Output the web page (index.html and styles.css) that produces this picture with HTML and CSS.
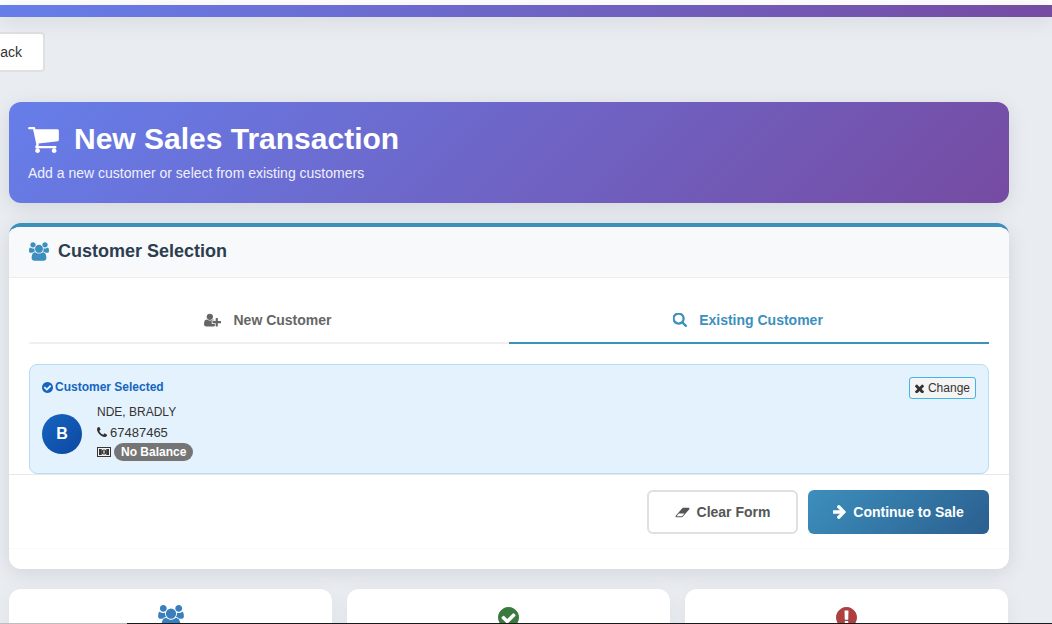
FILE: index.html
```html
<!DOCTYPE html>
<html lang="en">
<head>
<meta charset="utf-8">
<title>New Sales Transaction</title>
<link rel="stylesheet" href="styles.css">
</head>
<body>
<div class="topbar"></div>
<main class="page">
  <a class="back">Back</a>
  <header class="hero">
    <h1 class="hero-title">
      <svg class="hero-icon" viewBox="64 256 1664 1408"><path d="M704 1536q0 52-38 90t-90 38-90-38-38-90 38-90 90-38 90 38 38 90zm896 0q0 52-38 90t-90 38-90-38-38-90 38-90 90-38 90 38 38 90zm128-1088v512q0 24-16.500 42.500t-40.500 21.500l-1044 122q13 60 13 70 0 16-24 64h920q26 0 45 19t19 45-19 45-45 19h-1024q-26 0-45-19t-19-45q0-11 8-31.500t16-36 21.500-40 15.500-29.500l-177-823h-204q-26 0-45-19t-19-45 19-45 45-19h256q16 0 28.500 6.500t19.500 15.500 13 24.500 8 26 5.500 29.500 4.500 26h1201q26 0 45 19t19 45z"/></svg>
      New Sales Transaction
    </h1>
    <p class="hero-sub">Add a new customer or select from existing customers</p>
  </header>

  <section class="card">
    <div class="card-head">
      <svg class="users-icon" viewBox="0 0 1920 1792"><use href="#users"/></svg>
      <h2 class="card-title">Customer Selection</h2>
    </div>
    <div class="card-body">
      <div class="tabs">
        <div class="tab">
          <svg class="tab-icon" viewBox="0 128 2048 1536"><path d="M704 896q-159 0-271.500-112.500t-112.500-271.500 112.500-271.500 271.500-112.500 271.500 112.500 112.500 271.500-112.500 271.500-271.500 112.500zm960 128h352q13 0 22.500 9.500t9.500 22.500v192q0 13-9.500 22.500t-22.500 9.500h-352v352q0 13-9.500 22.500t-22.500 9.500h-192q-13 0-22.500-9.500t-9.500-22.500v-352h-352q-13 0-22.500-9.500t-9.500-22.500v-192q0-13 9.500-22.500t22.500-9.500h352v-352q0-13 9.500-22.500t22.500-9.500h192q13 0 22.500 9.500t9.500 22.500v352zm-736 224q0 52 38 90t90 38h256v238q-68 50-171 50h-874q-121 0-194-69.500t-73-189.500q0-53 3.500-103.500t14-109 26.500-108.500 43-97.500 62-81 85-53.500 111-20q19 0 39 17 79 61 154.500 91.500t164.500 30.500 164.500-30.500 154.500-91.500q20-17 39-17 132 0 217 96h-223q-52 0-90 38t-38 90v192z"/></svg>
          New Customer
        </div>
        <div class="tab tab-active">
          <svg class="tab-icon" viewBox="128 192 1600 1600"><path d="M1216 832q0-185-131.500-316.500t-316.500-131.500-316.500 131.500-131.500 316.500 131.500 316.500 316.500 131.500 316.500-131.500 131.500-316.500zm512 832q0 52-38 90t-90 38q-54 0-90-38l-343-342q-179 124-399 124-143 0-273.500-55.500t-225-150-150-225-55.500-273.500 55.500-273.500 150-225 225-150 273.500-55.500 273.500 55.500 225 150 150 225 55.500 273.500q0 220-124 399l343 343q37 37 37 90z"/></svg>
          Existing Customer
        </div>
      </div>
      <div class="selected">
        <div class="selected-top">
          <div class="selected-label">
            <svg class="check-icon" viewBox="128 128 1536 1536"><use href="#check"/></svg>
            Customer Selected
          </div>
          <button class="change">
            <svg class="x-icon" viewBox="302 302 1188 1188"><path d="M1490 1322q0 40-28 68l-136 136q-28 28-68 28t-68-28l-294-294-294 294q-28 28-68 28t-68-28l-136-136q-28-28-28-68t28-68l294-294-294-294q-28-28-28-68t28-68l136-136q28-28 68-28t68 28l294 294 294-294q28-28 68-28t68 28l136 136q28 28 28 68t-28 68l-294 294 294 294q28 28 28 68z"/></svg>
            Change
          </button>
        </div>
        <div class="person">
          <div class="avatar">B</div>
          <div class="person-info">
            <div class="person-line">NDE, BRADLY</div>
            <div class="person-line person-phone">
              <svg class="phone-icon" viewBox="192 128 1408 1408"><path d="M1600 1240q0 27-10 70.500t-21 68.500q-21 50-122 106-94 51-186 51-27 0-53-3.500t-57.500-12.500-47-14.500-55.500-20.500-49-18q-98-35-175-83-127-79-264-216t-216-264q-48-77-83-175-3-9-18-49t-20.500-55.500-14.500-47-12.500-57.500-3.500-53q0-92 51-186 56-101 106-122 25-11 68.500-21t70.500-10q14 0 21 3 18 6 53 76 11 19 30 54t35 63.500 31 53.500q3 4 17.500 25t21.500 35.500 7 28.500q0 20-28.500 50t-62 55-62 53-28.500 46q0 9 5 22.500t8.500 20.500 14 24 11.500 19q76 137 174 235t235 174q2 1 19 11.500t24 14 20.500 8.500 22.500 5q18 0 46-28.500t53-62 55-62 50-28.500q14 0 28.500 7t35.500 21.500 25 17.500q25 15 53.500 31t63.500 35 54 30q70 35 76 53 3 7 3 21z"/></svg>
              67487465
            </div>
            <div class="person-line">
              <svg class="money-icon" viewBox="0 0 14 10"><path d="M1.500 1.500h11v7h-11z" fill="#f4f4f4"/><path d="M0 0h14v10H0zM1 1v8h12V1zM2 2h2.500v6H2zM9.500 2H12v6H9.500z" fill="#3a3530" fill-rule="evenodd"/><path d="M2 2h2.500v6H2zM9.500 2H12v6H9.500z" fill="#3a3530"/><circle cx="7" cy="5" r="2.500" fill="#3a3530"/><rect x="6.400" y="3.500" width="1.200" height="3" fill="#f4f4f4"/></svg>
              <span class="badge">No Balance</span>
            </div>
          </div>
        </div>
      </div>
    </div>
    <div class="actions">
      <button class="btn btn-clear">
        <svg class="eraser-icon" viewBox="0 192 2048 1408"><path d="M960 1408l336-384h-768l-336 384h768zm1013-1077q15 34 9.500 71.500t-30.500 65.500l-896 1024q-38 44-96 44h-768q-38 0-69.500-20.500t-47.500-54.500q-15-34-9.500-71.500t30.500-65.500l896-1024q38-44 96-44h768q38 0 70 20.500t47 54.500z"/></svg>
        Clear Form
      </button>
      <button class="btn btn-go">
        <svg class="arrow-icon" viewBox="192 181 1408 1558"><path d="M1600 960q0 54-37 91l-651 651q-39 37-91 37-51 0-90-37l-75-75q-38-38-38-91t38-91l293-293h-704q-52 0-84.500-37.500t-32.500-90.500v-128q0-53 32.500-90.500t84.500-37.500h704l-293-294q-38-36-38-90t38-90l75-75q38-38 90-38 53 0 91 38l651 651q37 35 37 90z"/></svg>
        Continue to Sale
      </button>
    </div>
  </section>

  <section class="stats">
    <div class="stat">
      <svg class="stat-icon stat-users" viewBox="0 0 1920 1792"><use href="#users"/></svg>
    </div>
    <div class="stat">
      <svg class="stat-icon stat-ok" viewBox="128 128 1536 1536"><use href="#check"/></svg>
    </div>
    <div class="stat">
      <svg class="stat-icon stat-bad" viewBox="128 128 1536 1536"><path d="M896 128q209 0 385.500 103t279.500 279.500 103 385.500-103 385.500-279.500 279.500-385.500 103-385.500-103-279.500-279.500-103-385.500 103-385.500 279.500-279.500 385.500-103zm128 1247v-190q0-14-9-23.500t-22-9.500h-192q-13 0-23 10t-10 23v190q0 13 10 23t23 10h192q13 0 22-9.500t9-23.500zm-2-344l18-621q0-12-10-18-10-8-24-8h-220q-14 0-24 8-10 6-10 18l17 621q0 10 10 17.500t24 7.500h185q14 0 23.500-7.500t10.500-17.500z"/></svg>
    </div>
  </section>
</main>
<div class="edge"><span class="edge-a"></span><span class="edge-b"></span></div>

<svg class="defs" aria-hidden="true">
  <defs>
    <path id="users" d="M593 896q-162 5-265 128h-134q-82 0-138-40.500t-56-118.500q0-353 124-353 6 0 43.500 21t97.500 42.500 119 21.500q67 0 133-23-5 37-5 66 0 139 81 256zm1071 637q0 120-73 189.500t-194 69.500h-874q-121 0-194-69.500t-73-189.500q0-53 3.500-103.500t14-109 26.500-108.500 43-97.500 62-81 85.500-53.500 111.500-20q10 0 43 21.500t73 48 107 48 135 21.500 135-21.500 107-48 73-48 43-21.500q61 0 111.500 20t85.500 53.500 62 81 43 97.500 26.500 108.500 14 109 3.500 103.500zm-1024-1277q0 106-75 181t-181 75-181-75-75-181 75-181 181-75 181 75 75 181zm704 384q0 159-112.500 271.500t-271.500 112.500-271.500-112.500-112.500-271.500 112.500-271.500 271.500-112.500 271.500 112.500 112.500 271.500zm576 225q0 78-56 118.500t-138 40.500h-134q-103-123-265-128 81-117 81-256 0-29-5-66 66 23 133 23 59 0 119-21.500t97.500-42.500 43.500-21q124 0 124 353zm-128-609q0 106-75 181t-181 75-181-75-75-181 75-181 181-75 181 75 75 181z"/>
    <path id="check" d="M1412 734q0-28-18-46l-91-90q-19-19-45-19t-45 19l-408 407-226-226q-19-19-45-19t-45 19l-91 90q-18 18-18 46 0 27 18 45l362 362q19 19 45 19 27 0 46-19l543-543q18-18 18-45zm252 162q0 209-103 385.500t-279.500 279.500-385.500 103-385.500-103-279.500-279.500-103-385.500 103-385.500 279.500-279.500 385.500-103 385.500 103 279.500 279.500 103 385.500z"/>
  </defs>
</svg>
</body>
</html>
```
FILE: styles.css
```css
* { box-sizing: border-box; }
html, body { height: 624px; overflow: hidden; }
body {
  margin: 0;
  padding-top: 5px;
  background: #e9ecf1;
  font-family: "Liberation Sans", Arial, sans-serif;
  color: #333;
  position: relative;
}
body::before {
  content: "";
  position: absolute;
  left: 0; right: 0; top: 0;
  height: 5px;
  background: #fff;
}
.defs { width: 0; height: 0; position: absolute; }
.topbar {
  position: relative;
  height: 12px;
  background: linear-gradient(135deg, #667eea, #764ba2);
  box-shadow: 0 4px 20px rgba(0, 0, 0, .1);
}
.page {
  height: 607px;
  overflow: hidden;
  padding: 15px 43px 0 9px;
}
.back {
  display: flex;
  align-items: center;
  justify-content: flex-end;
  width: 80px;
  height: 40px;
  margin-left: -44px;
  padding-right: 21px;
  background: #fff;
  border: 2px solid #e0e0e0;
  border-radius: 4px;
  font-size: 14px;
  color: #333;
}
.hero {
  margin-top: 30px;
  height: 101px;
  padding: 18px 19px;
  border-radius: 12px;
  background: linear-gradient(135deg, #667eea, #764ba2);
  color: #fff;
  box-shadow: 0 4px 20px rgba(0, 0, 0, .1);
}
.hero-title {
  margin: 0;
  display: flex;
  align-items: center;
  gap: 15px;
  height: 37px;
  font-size: 30px;
  font-weight: 700;
}
.hero-icon { width: 31px; height: 26px; margin-top: 3px; fill: #fff; flex: none; }
.hero-sub {
  margin: 8px 0 0;
  font-size: 14px;
  line-height: 16px;
  opacity: .9;
}
.card {
  margin-top: 20px;
  height: 346px;
  background: #fff;
  border-top: 4px solid #3d8fbd;
  border-radius: 12px;
  overflow: hidden;
  box-shadow: 0 4px 20px rgba(0, 0, 0, .1);
}
.card-head {
  display: flex;
  align-items: center;
  gap: 9px;
  height: 51px;
  padding: 0 19px 2px 20px;
  background: #f8f9fa;
  border-bottom: 1px solid #eeeeee;
}
.users-icon { width: 20px; height: 19px; fill: #3d8fbd; flex: none; }
.card-title {
  margin: 0;
  font-size: 18px;
  font-weight: 700;
  color: #2c3e50;
}
.card-body { padding: 20px 20px 0; height: 196px; }
.tabs { display: flex; height: 46px; }
.tab {
  flex: 1;
  display: flex;
  align-items: center;
  justify-content: center;
  gap: 12px;
  padding-right: 2px;
  border-bottom: 2px solid #f0f0f0;
  font-size: 14px;
  font-weight: 700;
  color: #666;
}
.tab-active { color: #3d8fbd; border-bottom-color: #3d8fbd; }
.tab-icon { width: 17px; height: 14px; fill: #666; flex: none; }
.tab-active .tab-icon { width: 14px; height: 14px; fill: #3d8fbd; }
.selected {
  margin-top: 20px;
  height: 110px;
  padding: 12px;
  background: #e3f2fd;
  border: 1px solid #b9dcf5;
  border-radius: 8px;
}
.selected-top { display: flex; justify-content: space-between; align-items: flex-start; }
.selected-label {
  display: flex;
  align-items: center;
  gap: 2px;
  margin-top: 3px;
  font-size: 12px;
  font-weight: 700;
  color: #1565c0;
}
.check-icon { width: 11px; height: 11px; fill: #1565c0; }
.change {
  display: flex;
  align-items: center;
  gap: 4px;
  height: 22px;
  padding: 0 5px;
  background: #f4f4f4;
  border: 1px solid #42b4e6;
  border-radius: 3px;
  font: 12px "Liberation Sans", Arial, sans-serif;
  color: #333;
}
.x-icon { width: 9px; height: 9px; fill: #333; }
.person { display: flex; align-items: flex-start; gap: 15px; margin-top: 3px; }
.avatar {
  display: flex;
  align-items: center;
  justify-content: center;
  width: 40px;
  height: 40px;
  margin-top: 12px;
  border-radius: 50%;
  background: linear-gradient(135deg, #1565c0, #0d47a1);
  color: #fff;
  font-size: 16px;
  font-weight: 700;
}
.person-info { display: flex; flex-direction: column; }
.person-line {
  display: flex;
  align-items: center;
  gap: 3px;
  height: 20px;
  font-size: 12px;
  color: #333;
}
.person-phone { font-size: 13px; }
.phone-icon { width: 10px; height: 10px; fill: #333; }
.money-icon { width: 14px; height: 10px; }
.badge {
  display: inline-flex;
  align-items: center;
  height: 18px;
  padding: 0 7px;
  border-radius: 9px;
  background: #757575;
  color: #fff;
  font-size: 12px;
  font-weight: 700;
}
.actions {
  position: relative;
  display: flex;
  justify-content: flex-end;
  gap: 10px;
  height: 75px;
  padding: 15px 20px;
  background: #fff;
  border-top: 1px solid #e8e8e8;
  border-bottom: 1px solid #fafafa;
}
.btn {
  display: flex;
  align-items: center;
  justify-content: center;
  gap: 7px;
  height: 44px;
  border-radius: 6px;
  font: 700 14px "Liberation Sans", Arial, sans-serif;
}
.btn-clear { width: 151px; background: #fff; border: 2px solid #e0e0e0; color: #555; }
.btn-go { width: 181px; border: 0; background: linear-gradient(135deg, #3d8fbd, #2a5f8f); color: #fff; }
.eraser-icon { width: 15px; height: 11px; fill: #555; }
.arrow-icon { width: 13px; height: 14px; fill: #fff; }
.stats {
  display: grid;
  grid-template-columns: repeat(3, 323px);
  gap: 15px;
  margin-top: 20px;
}
.stat {
  height: 120px;
  padding-top: 18px;
  background: #fff;
  border-radius: 12px;
  display: flex;
  justify-content: center;
  align-items: flex-start;
  box-shadow: 0 4px 20px rgba(0, 0, 0, .05);
}
.stat-icon { width: 21px; height: 21px; }
.stat-users { width: 26px; height: 24px; margin-top: -2px; fill: #3a7fbd; }
.stat-ok { fill: #3b7a3e; }
.stat-bad { fill: #ad4040; }
.edge {
  position: absolute;
  left: 0; right: 0; bottom: 0;
  height: 1px;
  display: flex;
}
.edge-a { width: 127px; background: #bdbdbd; }
.edge-b { flex: 1; background: #1a1a1a; }
```
